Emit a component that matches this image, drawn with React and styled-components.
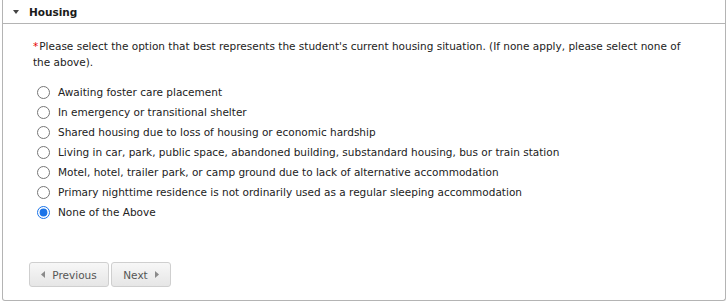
import React, { useState } from 'react';
import styled, { createGlobalStyle } from 'styled-components';

const GlobalStyle = createGlobalStyle`
  html, body {
    margin: 0;
    padding: 0;
    background: #ffffff;
  }
  body {
    font-family: "DejaVu Sans", Verdana, sans-serif;
    font-size: 10.5px;
    color: #222222;
  }
`;

const Panel = styled.section`
  margin: 0 2px;
  width: 722px;
  border: 1px solid #b4b4b4;
  border-top: none;
  border-bottom-right-radius: 3px;
  border-bottom-left-radius: 3px;
  background: #fff;
`;

const PanelHeader = styled.div`
  height: 23px;
  display: flex;
  align-items: center;
  padding-left: 10px;
  border-bottom: 1px solid #b4b4b4;
  font-weight: bold;
  color: #1a1a1a;
`;

const Caret = styled.span`
  width: 0;
  height: 0;
  border-left: 3.5px solid transparent;
  border-right: 3.5px solid transparent;
  border-top: 4px solid #444;
  margin-right: 10px;
  margin-top: 1px;
`;

const PanelBody = styled.div`
  padding: 14px 30px 13px 30px;
`;

const Prompt = styled.p`
  margin: 0;
  line-height: 16px;
`;

const Required = styled.span`
  color: #e60000;
  margin-right: 1px;
`;

const OptionList = styled.div`
  margin-top: 12px;
  display: flex;
  flex-direction: column;
`;

const Option = styled.label`
  display: flex;
  align-items: center;
  height: 20px;
  cursor: pointer;
`;

const Radio = styled.input`
  width: 13px;
  height: 13px;
  margin: 0 8px 0 4px;
  accent-color: #1a73e8;
`;

const Actions = styled.div`
  margin: 40px 0 0 -4px;
  display: flex;
  gap: 2px;
`;

const NavButton = styled.button`
  width: ${props => (props.next ? '60px' : '80px')};
  height: 25px;
  display: flex;
  align-items: center;
  justify-content: center;
  gap: 7px;
  padding: 0;
  font-family: inherit;
  font-size: 10.5px;
  color: #555;
  background: linear-gradient(#f7f7f7, #e6e6e6);
  border: 1px solid #cfcfcf;
  border-radius: 3px;
  cursor: pointer;
`;

const Arrow = ({ dir }) => (
  <svg width="4" height="7" viewBox="0 0 4 7">
    {dir === 'left' ? (
      <polygon points="4,0 4,7 0,3.5" fill="#8a8a8a" />
    ) : (
      <polygon points="0,0 0,7 4,3.5" fill="#8a8a8a" />
    )}
  </svg>
);

const options = [
  'Awaiting foster care placement',
  'In emergency or transitional shelter',
  'Shared housing due to loss of housing or economic hardship',
  'Living in car, park, public space, abandoned building, substandard housing, bus or train station',
  'Motel, hotel, trailer park, or camp ground due to lack of alternative accommodation',
  'Primary nighttime residence is not ordinarily used as a regular sleeping accommodation',
  'None of the Above',
];

export default function App() {
  const [selected, setSelected] = useState(options.length - 1);

  return (
    <>
      <GlobalStyle />
      <Panel>
        <PanelHeader>
          <Caret />
          Housing
        </PanelHeader>
        <PanelBody>
          <Prompt>
            <Required>*</Required>Please select the option that best represents the student's current
            housing situation. (If none apply, please select none of the above).
          </Prompt>
          <OptionList>
            {options.map((text, i) => (
              <Option key={text}>
                <Radio
                  type="radio"
                  name="housing"
                  checked={selected === i}
                  onChange={() => setSelected(i)}
                />
                {text}
              </Option>
            ))}
          </OptionList>
          <Actions>
            <NavButton>
              <Arrow dir="left" />
              Previous
            </NavButton>
            <NavButton next>
              Next
              <Arrow dir="right" />
            </NavButton>
          </Actions>
        </PanelBody>
      </Panel>
    </>
  );
}
